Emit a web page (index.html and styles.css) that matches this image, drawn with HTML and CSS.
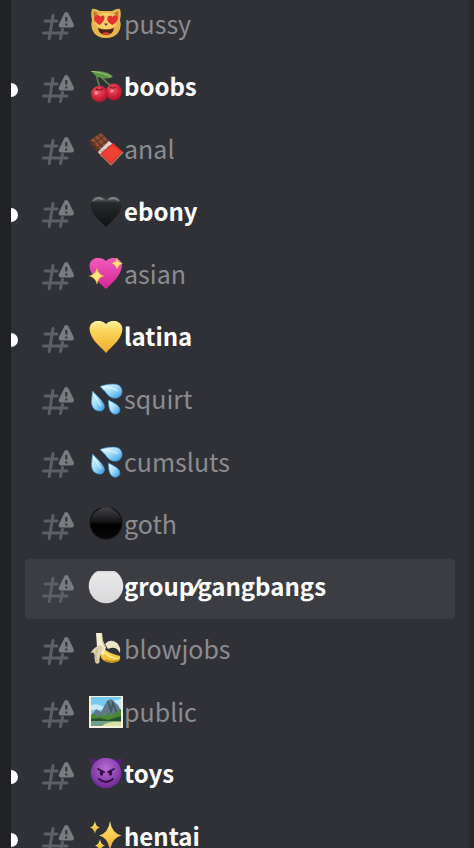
FILE: index.html
```html
<!DOCTYPE html>
<html lang="en">
<head>
    <meta charset="UTF-8">
    <meta name="viewport" content="width=device-width, initial-scale=1.0">
    <title>Channels</title>
    <link rel="stylesheet" href="styles.css">
</head>
<body>
    <!-- Shared icons -->
    <svg class="defs" width="0" height="0" aria-hidden="true">
        <defs>
            <symbol id="hash" viewBox="0 0 32 28">
                <path d="M11 3.500 7.200 26.500M20.500 17.500 18.500 26.500M3 9H15M1.500 21H25" fill="none" stroke="#5d5f64" stroke-width="3" stroke-linecap="round"/>
                <path d="M22.400 1Q24.300-1 26.200 1L31.700 12Q32.500 15.500 30 15.500H18.600Q16 15.500 17 12Z" fill="#797b7f"/>
                <path d="M24.300 5V9.500M24.300 11.600V13.400" fill="none" stroke="#303136" stroke-width="2"/>
            </symbol>
            <linearGradient id="drop" x1="0" y1="0" x2="1" y2="1">
                <stop offset="0" stop-color="#f0fbff"/>
                <stop offset=".5" stop-color="#9edcfb"/>
                <stop offset="1" stop-color="#3298e3"/>
            </linearGradient>
            <linearGradient id="gold" x1="0" y1="0" x2="0" y2="1">
                <stop offset="0" stop-color="#fff2a0"/>
                <stop offset=".3" stop-color="#fbd75c"/>
                <stop offset="1" stop-color="#eeaa2b"/>
            </linearGradient>
            <linearGradient id="pink" x1="0" y1="0" x2="0" y2="1">
                <stop offset="0" stop-color="#f25bbb"/>
                <stop offset="1" stop-color="#d32695"/>
            </linearGradient>
            <linearGradient id="ink" x1="0" y1="0" x2="0" y2="1">
                <stop offset="0" stop-color="#77787a"/>
                <stop offset=".2" stop-color="#28292b"/>
                <stop offset="1" stop-color="#101113"/>
            </linearGradient>
            <linearGradient id="orb" x1="0" y1="0" x2="0" y2="1">
                <stop offset="0" stop-color="#424346"/>
                <stop offset=".45" stop-color="#151516"/>
                <stop offset=".55" stop-color="#000"/>
                <stop offset="1" stop-color="#080808"/>
            </linearGradient>
            <linearGradient id="pearl" x1="0" y1="0" x2="0" y2="1">
                <stop offset="0" stop-color="#c9c9cb"/>
                <stop offset=".15" stop-color="#e9e9ea"/>
                <stop offset="1" stop-color="#d8d8da"/>
            </linearGradient>
            <radialGradient id="cherry" cx=".4" cy=".35" r=".7">
                <stop offset="0" stop-color="#f0586a"/>
                <stop offset=".6" stop-color="#d2223a"/>
                <stop offset="1" stop-color="#a01327"/>
            </radialGradient>
            <radialGradient id="imp" cx=".5" cy=".35" r=".65">
                <stop offset="0" stop-color="#b56fd2"/>
                <stop offset=".6" stop-color="#8e43b0"/>
                <stop offset="1" stop-color="#6b2891"/>
            </radialGradient>
            <symbol id="droplets" viewBox="0 0 36 36">
                <path d="M12 3.500C17 1.500 24 .5 29 1.500C35.500 3.500 35.500 12 30.500 14.500C26 16.500 21 14 19 11C17 8 14 5.500 12 3.500Z" fill="url(#drop)" stroke="#3a94d6" stroke-width=".7"/>
                <path d="M4.500 8C8 12 13 16 15.500 20.500C18 25 15 28.500 11 28C5 27.500 3.500 22.500 3.500 18Z" fill="url(#drop)" stroke="#3a94d6" stroke-width=".7"/>
                <path d="M20.500 17C25 19.500 30 21.500 31.500 25C33 29 29.500 32 26 31C21 29.500 20.500 23 20.500 17Z" fill="url(#drop)" stroke="#3a94d6" stroke-width=".7"/>
                <path d="M15 4Q23 4 30 8M5.500 11Q9 17 13 23" fill="none" stroke="#fff" stroke-opacity=".45" stroke-width="1.500"/>
            </symbol>
        </defs>
    </svg>

    <nav class="sidebar" aria-label="Channels">
        <ul class="channel-list">
            <li class="channel">
                <a class="channel-link" href="#">
                    <svg class="hash"><use href="#hash"/></svg>
                    <svg class="emoji" viewBox="0 0 36 36">
                        <path d="M4 1Q6-.2 12 3H24Q30-.2 32 1Q33.500 6 32 12Q34 20 30 25Q26 30 18 30T6 25Q2 20 4 12Q2.500 6 4 1Z" fill="#e9b64d"/>
                        <path d="M5.500 3L10 5L6 9ZM30.500 3L26 5L30 9Z" fill="#b97837"/>
                        <ellipse cx="18" cy="13" rx="11" ry="8" fill="#f6cf67"/>
                        <path d="M11.500 17C6 13.500 5.500 11 6.500 8.500C8.500 6 11.500 7 12.500 9C14.500 6 17 8 16.500 10.500C16 13.500 13.500 15.500 11.500 17ZM24.500 17C19 14.500 18.500 11 20 8.500C22 6.500 24 7.500 24.500 9C26.500 6 30 7.500 30 10.500C29.500 13.500 27 15.500 24.500 17Z" fill="#e62f32"/>
                        <path d="M16 15.500H20L18 18Z" fill="#56402c"/>
                        <path d="M10 20Q18 23 26 20Q25 27 18 27T10 20Z" fill="#4b211a"/>
                        <path d="M14 25.500Q18 23 22 25.500Q18 28 14 25.500Z" fill="#d84835"/>
                    </svg>
                    <span class="name">pussy</span>
                </a>
            </li>
            <li class="channel unread">
                <a class="channel-link" href="#">
                    <svg class="hash"><use href="#hash"/></svg>
                    <svg class="emoji" viewBox="0 0 36 36">
                        <path d="M8 3Q10 11 12.500 18M12 5Q18 11 25 17" fill="none" stroke="#638b49" stroke-width="1.500"/>
                        <path d="M3 0Q14-.5 20 2Q24 4 25 6Q17 9 10 6Q6 4 3 0Z" fill="#5c9448"/>
                        <path d="M3 0Q13 1 23 5.500" fill="none" stroke="#a2c476" stroke-width="1"/>
                        <ellipse cx="26" cy="21" rx="8" ry="8.500" fill="url(#cherry)"/>
                        <ellipse cx="11.500" cy="23" rx="8.500" ry="8.300" fill="url(#cherry)"/>
                        <path d="M8 18Q12 20 15 17.500M22 16Q25 18 28 16" fill="none" stroke="#8c1425" stroke-width="1.400"/>
                        <circle cx="8" cy="22" r="1.800" fill="#ff9aa4"/>
                        <circle cx="24" cy="20" r="1.500" fill="#ff9aa4"/>
                    </svg>
                    <span class="name">boobs</span>
                </a>
            </li>
            <li class="channel">
                <a class="channel-link" href="#">
                    <svg class="hash"><use href="#hash"/></svg>
                    <svg class="emoji" viewBox="0 0 36 36">
                        <path d="M1 8L13 0L22 9L11 21Z" fill="#8d5238"/>
                        <path d="M1 8L11 21L12 17L3 7Z" fill="#5b301f"/>
                        <path d="M6 4.500L16 16M10 2L20 12M4.500 11.500L16 3M8 16L20 6.500" stroke="#643723" stroke-width="1.200"/>
                        <path d="M10 19L21 8L26 12L14 24Z" fill="#ddd8d4"/>
                        <path d="M12 18L14 19L16 16L18 17L20 13L23 13" fill="none" stroke="#9c9695" stroke-width="1"/>
                        <path d="M12 21L25 10L35 19L23 32Z" fill="#dd3028"/>
                        <path d="M14 21L25 12L33 19L23 29Z" fill="#ee4034"/>
                        <path d="M12 21L23 32L35 19" fill="none" stroke="#b87c55" stroke-width="1.200"/>
                    </svg>
                    <span class="name">anal</span>
                </a>
            </li>
            <li class="channel unread">
                <a class="channel-link" href="#">
                    <svg class="hash"><use href="#hash"/></svg>
                    <svg class="emoji" viewBox="0 0 36 36">
                        <path d="M18 31C12 25 3 18 2.500 9C2.500 1 12-2 18 4C24-2 33 1 33.500 9C33 18 24 25 18 31Z" fill="url(#ink)"/>
                        <path d="M5 5Q10 0 15 4M21 4Q26 0 31 5" fill="none" stroke="#b3b4b6" stroke-opacity=".4" stroke-width="1.500"/>
                    </svg>
                    <span class="name">ebony</span>
                </a>
            </li>
            <li class="channel">
                <a class="channel-link" href="#">
                    <svg class="hash"><use href="#hash"/></svg>
                    <svg class="emoji" viewBox="0 0 36 36">
                        <path d="M18 31C12 25 2 18 1.500 8C1.500 0 12-3 18 3C24-3 34 0 34 8C33 18 24 25 18 31Z" fill="url(#pink)"/>
                        <path d="M9 10Q10 16 15.500 18Q10 19.500 9 26Q7.500 19.500 1.500 18Q8 16 9 10Z" fill="#ffe680" stroke="#efb12e" stroke-width=".5"/>
                        <path d="M29 0Q29.500 4 34.500 5.500Q30 6.500 29 11Q28 6.500 24 5.500Q28.500 4 29 0Z" fill="#ffe680" stroke="#efb12e" stroke-width=".5"/>
                    </svg>
                    <span class="name">asian</span>
                </a>
            </li>
            <li class="channel unread">
                <a class="channel-link" href="#">
                    <svg class="hash"><use href="#hash"/></svg>
                    <svg class="emoji" viewBox="0 0 36 36">
                        <path d="M18 32C12 25 2 18 1.500 8C1.500 0 12-3 18 3C24-3 34 0 34.500 8C34 18 24 25 18 32Z" fill="url(#gold)"/>
                    </svg>
                    <span class="name">latina</span>
                </a>
            </li>
            <li class="channel">
                <a class="channel-link" href="#">
                    <svg class="hash"><use href="#hash"/></svg>
                    <svg class="emoji"><use href="#droplets"/></svg>
                    <span class="name">squirt</span>
                </a>
            </li>
            <li class="channel">
                <a class="channel-link" href="#">
                    <svg class="hash"><use href="#hash"/></svg>
                    <svg class="emoji"><use href="#droplets"/></svg>
                    <span class="name">cumsluts</span>
                </a>
            </li>
            <li class="channel">
                <a class="channel-link" href="#">
                    <svg class="hash"><use href="#hash"/></svg>
                    <svg class="emoji" viewBox="0 0 36 36">
                        <circle cx="18" cy="15" r="16.500" fill="#111214"/>
                        <circle cx="18" cy="15" r="15.300" fill="url(#orb)"/>
                    </svg>
                    <span class="name">goth</span>
                </a>
            </li>
            <li class="channel selected">
                <a class="channel-link" href="#" aria-current="page">
                    <svg class="hash"><use href="#hash"/></svg>
                    <svg class="emoji" viewBox="0 0 36 36">
                        <circle cx="18" cy="15" r="17.300" fill="url(#pearl)"/>
                    </svg>
                    <span class="name">group⁄gangbangs</span>
                </a>
            </li>
            <li class="channel">
                <a class="channel-link" href="#">
                    <svg class="hash"><use href="#hash"/></svg>
                    <svg class="emoji" viewBox="0 0 36 36">
                        <path d="M17 11Q22 5 29 10Q33 14 32 20Q28 12 20 16Z" fill="#eee5c5"/>
                        <path d="M15 14Q19 20 32 23Q33 25 31 28Q22 32 15 27Q11 23 12 15Z" fill="#f1c33a"/>
                        <path d="M15 17Q19 24 31 26" fill="none" stroke="#ffe37b" stroke-width="2.200"/>
                        <path d="M17 27Q24 30 31 27" fill="none" stroke="#c98e25" stroke-width="1.500"/>
                        <path d="M8 0H14Q14 8 18 14L15 23L9 14Z" fill="#f5edcf"/>
                        <path d="M12 12Q6 14 2.500 20Q7 18 6.500 25L7.500 30Q10 32 11.500 29Q11 22 16 15Z" fill="#ded1ae"/>
                        <path d="M14 3Q14 9 17 14M10 15Q6 21 9 29" fill="none" stroke="#b7a576" stroke-width=".8"/>
                    </svg>
                    <span class="name">blowjobs</span>
                </a>
            </li>
            <li class="channel">
                <a class="channel-link" href="#">
                    <svg class="hash"><use href="#hash"/></svg>
                    <svg class="emoji" viewBox="0 0 36 36">
                        <path d="M1 0H35V32H1Z" fill="#f4f2df"/>
                        <path d="M3 1H33V30H3Z" fill="#74c9ee"/>
                        <path d="M3 9Q9 7 14 10T24 5L33 3V14H3Z" fill="#c4eafa"/>
                        <path d="M3 20L8 13L13 16L19 5L23 3L30 9L33 15V26H3Z" fill="#607a8c"/>
                        <path d="M20 5L23 15L25 7L29 18" fill="none" stroke="#3f5968" stroke-width="1.800"/>
                        <path d="M3 19L6 17L9 21L13 18L16 21L20 16L23 20L27 17L33 13V27H3Z" fill="#4c8735"/>
                        <path d="M3 23L12 22L20 24L33 20V26H3Z" fill="#24512c"/>
                        <path d="M3 25H33V30H3Z" fill="#70a08a"/>
                        <path d="M14 30Q20 25 33 26V30Z" fill="#dce0a1"/>
                    </svg>
                    <span class="name">public</span>
                </a>
            </li>
            <li class="channel unread">
                <a class="channel-link" href="#">
                    <svg class="hash"><use href="#hash"/></svg>
                    <svg class="emoji" viewBox="0 0 36 36">
                        <path d="M2 0Q2 8 7 11L12 2Q6 2 2 0ZM34 0Q34 8 29 11L24 2Q30 2 34 0Z" fill="#542077"/>
                        <circle cx="18" cy="15" r="15.300" fill="url(#imp)"/>
                        <path d="M10 11L16 14M26 11L20 14M11 21Q18 27 25 21" fill="none" stroke="#301044" stroke-width="1.800" stroke-linecap="round"/>
                        <ellipse cx="13.500" cy="15" rx="1.700" ry="2.800" fill="#301044"/>
                        <ellipse cx="22.500" cy="15" rx="1.700" ry="2.800" fill="#301044"/>
                    </svg>
                    <span class="name">toys</span>
                </a>
            </li>
            <li class="channel unread">
                <a class="channel-link" href="#">
                    <svg class="hash"><use href="#hash"/></svg>
                    <svg class="emoji" viewBox="0 0 36 36">
                        <path d="M22 0Q23.500 12 33.500 14.500Q23.500 17 22 30Q20.500 17 11 14.500Q20.500 12 22 0Z" fill="url(#gold)"/>
                        <path d="M7 0Q7.500 5.500 12 6.500Q7.500 7.500 7 13Q6 7.500 2 6.500Q6 5.500 7 0Z" fill="url(#gold)"/>
                        <path d="M12 18Q12.500 23.500 17 24.500Q12.500 25.500 12 31Q11 25.500 7 24.500Q11 23.500 12 18Z" fill="url(#gold)"/>
                    </svg>
                    <span class="name">hentai</span>
                </a>
            </li>
        </ul>
    </nav>
</body>
</html>
```

FILE: styles.css
```css
* {
    margin: 0;
    padding: 0;
    box-sizing: border-box;
}

body {
    font-family: 'Noto Sans CJK JP', 'Noto Sans', sans-serif;
    background: #303136;
    color: #8b8c90;
    height: 100vh;
    overflow: hidden;
}

.defs {
    position: absolute;
}

.sidebar {
    height: 100vh;
    overflow: hidden;
    border-left: 11px solid #212226;
    border-right: 5px solid #27282c;
}

/* the list is scrolled a little past its first row */
.channel-list {
    list-style: none;
    margin-top: -4px;
}

.channel {
    position: relative;
    padding: 0 14px;
    margin-bottom: 3px;
}

.channel:nth-child(even) {
    margin-bottom: 2px;
}

.channel-link {
    display: flex;
    align-items: center;
    height: 60px;
    padding-left: 17px;
    border-radius: 4px;
    color: inherit;
    text-decoration: none;
}

.hash {
    flex: none;
    width: 32px;
    height: 28px;
    margin-right: 14px;
}

.emoji {
    flex: none;
    width: 36px;
    height: 36px;
}

.name {
    padding-bottom: 6px;
    font-size: 25px;
    line-height: 36px;
    white-space: nowrap;
}

.unread,
.selected {
    color: #fff;
}

.unread .name,
.selected .name {
    font-size: 24px;
    font-weight: 700;
}

.selected .channel-link {
    background: #3c3d43;
}

/* unread marker on the left edge */
.unread::before {
    content: '';
    position: absolute;
    left: 0;
    top: 24px;
    width: 7px;
    height: 14px;
    border-radius: 0 7px 7px 0;
    background: #fff;
}
```
